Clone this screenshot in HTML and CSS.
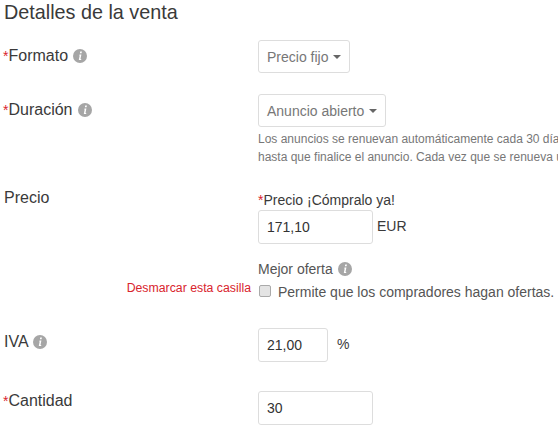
FILE: index.html
```html
<!DOCTYPE html>
<html>
<head>
  <meta charset="utf-8">
  <meta name="viewport" content="width=device-width, initial-scale=1.0">
  <title>Detalles de la venta</title>
  <link rel="stylesheet" href="styles.css">
</head>
<body>
    <h1 class="title">Detalles de la venta</h1>

    <div class="row row-format">
        <div class="label"><span class="req">*</span>Formato <svg class="info" viewBox="0 0 14 14"><circle cx="7" cy="7" r="7"/><path d="M7.2 2.6h1.7l-.3 1.6H6.9zM6.6 5.4h1.8l-.9 4.5h.8l-.2 1H5.8l.9-4.5h-.6z"/></svg></div>
        <div class="field"><button class="dropdown">Precio fijo<span class="caret"></span></button></div>
    </div>

    <div class="row row-duration">
        <div class="label"><span class="req">*</span>Duración <svg class="info" viewBox="0 0 14 14"><circle cx="7" cy="7" r="7"/><path d="M7.2 2.6h1.7l-.3 1.6H6.9zM6.6 5.4h1.8l-.9 4.5h.8l-.2 1H5.8l.9-4.5h-.6z"/></svg></div>
        <div class="field">
            <button class="dropdown">Anuncio abierto<span class="caret"></span></button>
            <p class="help">Los anuncios se renuevan automáticamente cada 30 días<br>hasta que finalice el anuncio. Cada vez que se renueva un</p>
        </div>
    </div>

    <div class="row row-price">
        <div class="label">Precio</div>
        <div class="field">
            <div class="sublabel"><span class="req">*</span>Precio ¡Cómpralo ya!</div>
            <div class="input-line">
                <input class="input input-wide" type="text" value="171,10">
                <span class="unit">EUR</span>
            </div>
        </div>
    </div>

    <div class="row row-offer">
        <div class="label-note">Desmarcar esta casilla</div>
        <div class="field">
            <div class="offer-title">Mejor oferta <svg class="info" viewBox="0 0 14 14"><circle cx="7" cy="7" r="7"/><path d="M7.2 2.6h1.7l-.3 1.6H6.9zM6.6 5.4h1.8l-.9 4.5h.8l-.2 1H5.8l.9-4.5h-.6z"/></svg></div>
            <label class="check"><span class="box"></span>Permite que los compradores hagan ofertas.</label>
        </div>
    </div>

    <div class="row row-iva">
        <div class="label">IVA <svg class="info" viewBox="0 0 14 14"><circle cx="7" cy="7" r="7"/><path d="M7.2 2.6h1.7l-.3 1.6H6.9zM6.6 5.4h1.8l-.9 4.5h.8l-.2 1H5.8l.9-4.5h-.6z"/></svg></div>
        <div class="field">
            <div class="input-line">
                <input class="input input-small" type="text" value="21,00">
                <span class="unit unit-pct">%</span>
            </div>
        </div>
    </div>

    <div class="row row-qty">
        <div class="label"><span class="req">*</span>Cantidad</div>
        <div class="field"><input class="input input-wide" type="text" value="30"></div>
    </div>
</body>
</html>
```

FILE: styles.css
```css
* {
    box-sizing: border-box;
}
html, body {
    height: 433px;
    overflow: hidden;
}
body {
    background-color: #fff;
    margin: 0;
    font-family: "Liberation Sans", Arial, sans-serif;
    font-size: 14px;
    color: #3a3a3a;
}
.title {
    margin: 0;
    padding: 2px 0 0 4px;
    font-size: 19.8px;
    line-height: 20px;
    font-weight: 400;
}

/* Rows */
.row {
    display: grid;
    grid-template-columns: 258px 340px;
}
.row-format { margin-top: 18px; }
.row-duration { margin-top: 21px; }
.row-price { margin-top: 22px; }
.row-offer { margin-top: 16px; }
.row-iva { margin-top: 27px; }
.row-qty { margin-top: 29px; }

.label {
    padding: 6px 0 0 3px;
    font-size: 16px;
    line-height: 20px;
}
.row-price .label { padding: 0 0 0 4px; }
.row-qty .label { padding-top: 0; }
.row-iva .label { padding: 4px 0 0 4px; }
.req {
    font-size: 14px;
    color: #d9242e;
}
.info {
    width: 14px;
    height: 14px;
    margin-left: 1px;
    vertical-align: -2px;
    fill: #a6a6a6;
}
.info path {
    fill: #fff;
}

/* Controls */
.dropdown {
    display: block;
    height: 33px;
    padding: 0 8px;
    border: 1px solid #ddd;
    border-radius: 3px;
    background-color: #fff;
    color: #777;
    font-family: inherit;
    font-size: 14px;
}
.caret {
    display: inline-block;
    margin-left: 5px;
    vertical-align: 3px;
    border-top: 4px solid #666;
    border-left: 4px solid transparent;
    border-right: 4px solid transparent;
}
.help {
    margin: 3px 0 0 0;
    font-size: 12px;
    line-height: 18px;
    color: #777;
    white-space: nowrap;
}
.row-price .field {
    padding-top: 3px;
}
.sublabel {
    font-size: 14px;
    line-height: 19px;
}
.input-line {
    display: flex;
    align-items: center;
}
.input {
    height: 34px;
    padding: 0 8px;
    border: 1px solid #ddd;
    border-radius: 3px;
    color: #333;
    font-family: inherit;
    font-size: 14px;
    display: block;
}
.input-wide { width: 115px; }
.input-small { width: 70px; }
.unit {
    margin-left: 4px;
    padding-bottom: 2px;
}
.unit-pct { margin-left: 9px; }

/* Best offer */
.label-note {
    align-self: end;
    padding: 0 7px 5px 0;
    text-align: right;
    font-size: 12.3px;
    line-height: 16px;
    color: #d9242e;
}
.offer-title {
    line-height: 18px;
    color: #555;
}
.check {
    display: flex;
    align-items: center;
    margin-top: 5px;
    line-height: 18px;
    white-space: nowrap;
    color: #555;
}
.box {
    width: 12px;
    height: 12px;
    margin: 0 7px 2px 1px;
    border: 1px solid #aaa;
    border-radius: 2px;
    background-color: #e4e4e4;
}
```
